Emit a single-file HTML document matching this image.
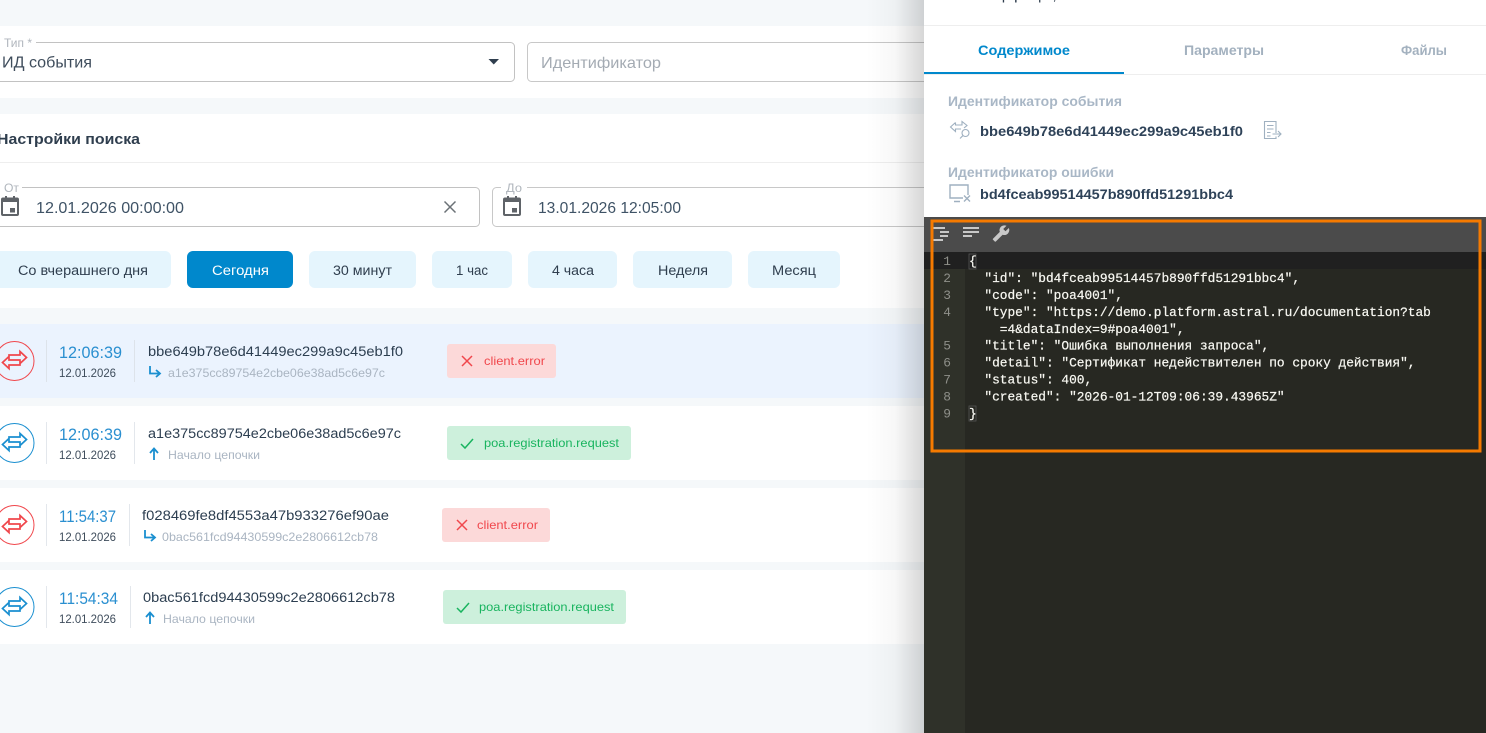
<!DOCTYPE html>
<html lang="ru"><head><meta charset="utf-8"><title>События</title>
<style>
html,body{margin:0;padding:0;background:#f5f8fa;overflow:hidden}
svg{display:block;font-family:"Liberation Sans",sans-serif}
.m{font-family:"Liberation Mono",monospace;font-size:12.83px;fill:#f8f8f2;stroke:#f8f8f2;stroke-width:.22px}
.n{font-family:"Liberation Mono",monospace;font-size:12.83px;fill:#8f908a}
.b{font-size:13.5px;fill:#2c3e50;text-anchor:start}
</style></head><body>
<svg xmlns="http://www.w3.org/2000/svg" width="1486" height="733" viewBox="0 0 1486 733">
<defs>
<linearGradient id="sh" x1="0" x2="1" y1="0" y2="0"><stop offset="0" stop-color="#000" stop-opacity="0"/><stop offset=".5" stop-color="#000" stop-opacity=".03"/><stop offset="1" stop-color="#000" stop-opacity=".16"/></linearGradient>
<g id="ex" fill="none" stroke-linejoin="miter">
<circle cx="0" cy="0" r="19.5" stroke-width="1"/>
<path stroke-width="1.7" d="M-5.500 -4.500 V-6 H5.500 V-9.500 L12 -3.500 L5.500 2.500 V-1 H-5.500 V-4.500 L-12 1.500 L-5.500 7.500 V4 H5.500 V2.500"/>
</g>
</defs>
<rect width="1486" height="733" fill="#f5f8fa"/>
<!-- cards -->
<rect x="0" y="26" width="924" height="72" fill="#fff"/>
<rect x="0" y="114" width="924" height="194" fill="#fff"/>
<rect x="0" y="324" width="924" height="74" fill="#ebf3fe"/>
<rect x="0" y="406" width="924" height="74" fill="#fff"/>
<rect x="0" y="488" width="924" height="74" fill="#fff"/>
<rect x="0" y="570" width="924" height="74" fill="#fff"/>
<!-- select -->
<rect x="-8" y="42.500" width="522.500" height="39" rx="4" fill="#fff" stroke="#c2c2c2"/>
<rect x="0" y="40" width="36" height="5" fill="#fff"/>
<text x="4" y="47" font-size="11.500" fill="#b0b6bd" textLength="28" lengthAdjust="spacingAndGlyphs">Тип *</text>
<text x="2" y="67.500" font-size="16" fill="#3f4d5c" textLength="90" lengthAdjust="spacingAndGlyphs">ИД события</text>
<path d="M488.500 59 H499 L493.750 64.500 Z" fill="#2f3e4e"/>
<rect x="527.500" y="42.500" width="420" height="39" rx="4" fill="#fff" stroke="#c8c8c8"/>
<text x="541" y="68" font-size="16" fill="#a4abb3" textLength="120" lengthAdjust="spacingAndGlyphs">Идентификатор</text>
<!-- search settings -->
<text x="-3" y="144" font-size="15" font-weight="bold" fill="#2f3e4e" textLength="143" lengthAdjust="spacingAndGlyphs">Настройки поиска</text>
<rect x="0" y="162" width="924" height="1" fill="#eeeeee"/>
<rect x="-8" y="187.500" width="487.500" height="39" rx="4" fill="#fff" stroke="#c2c2c2"/>
<rect x="0" y="185" width="22" height="5" fill="#fff"/>
<text x="4" y="192" font-size="11.500" fill="#b0b6bd" textLength="15" lengthAdjust="spacingAndGlyphs">От</text>
<g fill="#5f6368"><path d="M3 197.500 H5 V196 H7 V197.500 H13 V196 H15 V197.500 H17 Q19 197.500 19 199.500 V214 Q19 216 17 216 H3 Q1 216 1 214 V199.500 Q1 197.500 3 197.500 Z M3 202 V214 H17 V202 Z"/><rect x="10" y="208" width="5" height="4.500"/></g>
<text x="36" y="213" font-size="16" fill="#3f5366" textLength="148" lengthAdjust="spacingAndGlyphs">12.01.2026 00:00:00</text>
<path d="M444.500 201.500 L455.500 212.500 M455.500 201.500 L444.500 212.500" stroke="#6b7177" stroke-width="1.500" fill="none"/>
<rect x="492.500" y="187.500" width="460" height="39" rx="4" fill="#fff" stroke="#c8c8c8"/>
<rect x="501" y="185" width="26" height="5" fill="#fff"/>
<text x="506" y="192" font-size="11.500" fill="#b0b6bd" textLength="16" lengthAdjust="spacingAndGlyphs">До</text>
<g transform="translate(502,0)" fill="#5f6368"><path d="M3 197.500 H5 V196 H7 V197.500 H13 V196 H15 V197.500 H17 Q19 197.500 19 199.500 V214 Q19 216 17 216 H3 Q1 216 1 214 V199.500 Q1 197.500 3 197.500 Z M3 202 V214 H17 V202 Z"/><rect x="10" y="208" width="5" height="4.500"/></g>
<text x="538" y="213" font-size="16" fill="#3f5366" textLength="143" lengthAdjust="spacingAndGlyphs">13.01.2026 12:05:00</text>
<!-- buttons -->
<g fill="#e5f5fd">
<rect x="-10" y="251" width="181" height="37" rx="6"/>
<rect x="309" y="251" width="107" height="37" rx="6"/>
<rect x="432" y="251" width="80" height="37" rx="6"/>
<rect x="528" y="251" width="89" height="37" rx="6"/>
<rect x="633" y="251" width="99" height="37" rx="6"/>
<rect x="748" y="251" width="92" height="37" rx="6"/>
</g>
<rect x="187" y="251" width="106" height="37" rx="6" fill="#0088cc"/>
<g font-size="13.500" fill="#2f3e4e">
<text x="18" y="275" textLength="130" lengthAdjust="spacingAndGlyphs">Со вчерашнего дня</text>
<text x="212" y="275" fill="#fff" textLength="57" lengthAdjust="spacingAndGlyphs">Сегодня</text>
<text x="333" y="275" textLength="59" lengthAdjust="spacingAndGlyphs">30 минут</text>
<text x="456" y="275" textLength="32" lengthAdjust="spacingAndGlyphs">1 час</text>
<text x="552" y="275" textLength="42" lengthAdjust="spacingAndGlyphs">4 часа</text>
<text x="658" y="275" textLength="50" lengthAdjust="spacingAndGlyphs">Неделя</text>
<text x="772" y="275" textLength="44" lengthAdjust="spacingAndGlyphs">Месяц</text>
</g>
<!-- row 1 -->
<g><use href="#ex" x="14.500" y="361" stroke="#f0474c"/>
<rect x="46" y="340" width="1" height="42" fill="#dde3ea"/><rect x="134" y="340" width="1" height="42" fill="#dde3ea"/>
<text x="59" y="358" font-size="17" fill="#2a8fd0" textLength="63" lengthAdjust="spacingAndGlyphs">12:06:39</text>
<text x="59" y="377" font-size="12" fill="#3f4d5c" textLength="57" lengthAdjust="spacingAndGlyphs">12.01.2026</text>
<text x="148" y="356" class="b" textLength="255" lengthAdjust="spacingAndGlyphs">bbe649b78e6d41449ec299a9c45eb1f0</text>
<path d="M150 366 V373.500 H159 M156 370 L160 373.500 L156 377" stroke="#1a8fd0" stroke-width="1.800" fill="none"/>
<text x="168" y="377" font-size="12" fill="#aab5c2" textLength="217" lengthAdjust="spacingAndGlyphs">a1e375cc89754e2cbe06e38ad5c6e97c</text>
<rect x="447" y="344" width="109" height="34" rx="3" fill="#fcd9d9"/>
<path d="M462 356 L472 366 M472 356 L462 366" stroke="#f0474c" stroke-width="1.500"/>
<text x="484" y="365" font-size="12" fill="#f0474c" textLength="61" lengthAdjust="spacingAndGlyphs">client.error</text></g>
<!-- row 2 -->
<g><use href="#ex" x="14.500" y="443" stroke="#1a8fd0"/>
<rect x="46" y="422" width="1" height="42" fill="#e3e7ec"/><rect x="134" y="422" width="1" height="42" fill="#e3e7ec"/>
<text x="59" y="440" font-size="17" fill="#2a8fd0" textLength="63" lengthAdjust="spacingAndGlyphs">12:06:39</text>
<text x="59" y="459" font-size="12" fill="#3f4d5c" textLength="57" lengthAdjust="spacingAndGlyphs">12.01.2026</text>
<text x="148" y="438" class="b" textLength="253" lengthAdjust="spacingAndGlyphs">a1e375cc89754e2cbe06e38ad5c6e97c</text>
<path d="M154 460 V449 M150 453 L154 448.500 L158 453" stroke="#1a8fd0" stroke-width="1.800" fill="none"/>
<text x="168" y="459" font-size="12" fill="#aab5c2" textLength="92" lengthAdjust="spacingAndGlyphs">Начало цепочки</text>
<rect x="447" y="426" width="184" height="34" rx="3" fill="#cdf0dc"/>
<path d="M461 444 L465 448 L473 439" stroke="#19b45f" stroke-width="1.500" fill="none"/>
<text x="484" y="447" font-size="12" fill="#19b45f" textLength="135" lengthAdjust="spacingAndGlyphs">poa.registration.request</text></g>
<!-- row 3 -->
<g><use href="#ex" x="14.500" y="525" stroke="#f0474c"/>
<rect x="46" y="504" width="1" height="42" fill="#e3e7ec"/><rect x="129" y="504" width="1" height="42" fill="#e3e7ec"/>
<text x="59" y="522" font-size="17" fill="#2a8fd0" textLength="57" lengthAdjust="spacingAndGlyphs">11:54:37</text>
<text x="59" y="541" font-size="12" fill="#3f4d5c" textLength="57" lengthAdjust="spacingAndGlyphs">12.01.2026</text>
<text x="142" y="520" class="b" textLength="247" lengthAdjust="spacingAndGlyphs">f028469fe8df4553a47b933276ef90ae</text>
<path d="M145 530 V537.500 H154 M151 534 L155 537.500 L151 541" stroke="#1a8fd0" stroke-width="1.800" fill="none"/>
<text x="162" y="541" font-size="12" fill="#aab5c2" textLength="216" lengthAdjust="spacingAndGlyphs">0bac561fcd94430599c2e2806612cb78</text>
<rect x="442" y="508" width="108" height="34" rx="3" fill="#fcd9d9"/>
<path d="M457 520 L467 530 M467 520 L457 530" stroke="#f0474c" stroke-width="1.500"/>
<text x="477" y="529" font-size="12" fill="#f0474c" textLength="61" lengthAdjust="spacingAndGlyphs">client.error</text></g>
<!-- row 4 -->
<g><use href="#ex" x="14.500" y="607" stroke="#1a8fd0"/>
<rect x="46" y="586" width="1" height="42" fill="#e3e7ec"/><rect x="130" y="586" width="1" height="42" fill="#e3e7ec"/>
<text x="59" y="604" font-size="17" fill="#2a8fd0" textLength="59" lengthAdjust="spacingAndGlyphs">11:54:34</text>
<text x="59" y="623" font-size="12" fill="#3f4d5c" textLength="57" lengthAdjust="spacingAndGlyphs">12.01.2026</text>
<text x="143" y="602" class="b" textLength="252" lengthAdjust="spacingAndGlyphs">0bac561fcd94430599c2e2806612cb78</text>
<path d="M150 624 V613 M146 617 L150 612.500 L154 617" stroke="#1a8fd0" stroke-width="1.800" fill="none"/>
<text x="163" y="623" font-size="12" fill="#aab5c2" textLength="92" lengthAdjust="spacingAndGlyphs">Начало цепочки</text>
<rect x="443" y="590" width="183" height="34" rx="3" fill="#cdf0dc"/>
<path d="M457 608 L461 612 L469 603" stroke="#19b45f" stroke-width="1.500" fill="none"/>
<text x="479" y="611" font-size="12" fill="#19b45f" textLength="135" lengthAdjust="spacingAndGlyphs">poa.registration.request</text></g>
<!-- panel shadow -->
<rect x="866" y="0" width="58" height="733" fill="url(#sh)"/>
<!-- panel -->
<rect x="924" y="0" width="562" height="733" fill="#fff"/>
<text x="985" y="-0.500" font-size="15" font-weight="bold" fill="#2f3e4e" textLength="71" lengthAdjust="spacingAndGlyphs">Информация,</text>
<rect x="924" y="25" width="562" height="1" fill="#eeeeee"/>
<rect x="924" y="74" width="562" height="1" fill="#eeeeee"/>
<rect x="924" y="72" width="200" height="2" fill="#0088cc"/>
<g font-size="14" font-weight="bold">
<text x="978" y="55" fill="#0088cc" textLength="92" lengthAdjust="spacingAndGlyphs">Содержимое</text>
<text x="1184" y="55" fill="#a3b1bf" textLength="80" lengthAdjust="spacingAndGlyphs">Параметры</text>
<text x="1401" y="55" fill="#a3b1bf" textLength="46" lengthAdjust="spacingAndGlyphs">Файлы</text>
</g>
<text x="948" y="106" font-size="13.500" font-weight="bold" fill="#a9b7c6" textLength="174" lengthAdjust="spacingAndGlyphs">Идентификатор события</text>
<g fill="none" stroke="#9fb0c0" stroke-width="1.100">
<path d="M955.500 122.500 L950.500 127 L955.500 131.500 V129 H961 M955.500 122.500 V125 H962 V121.500 L967 125.500 L964 128"/>
<circle cx="965.500" cy="133" r="3.500"/><path d="M962.800 135.700 L960 138.500"/>
</g>
<text x="980" y="136" font-size="14" font-weight="bold" fill="#2e4258" textLength="263" lengthAdjust="spacingAndGlyphs">bbe649b78e6d41449ec299a9c45eb1f0</text>
<g fill="none" stroke="#9fb0c0" stroke-width="1.100">
<path d="M1276 133 V121.500 H1264.500 V138.500 H1276 V136.500"/>
<path d="M1267 125.500 H1273.500 M1267 129 H1273.500 M1267 132.500 H1270.500 M1267 136 H1270.500 M1272.500 134 H1281 M1278 131 L1281 134 L1278 137"/>
</g>
<text x="948" y="177" font-size="13.500" font-weight="bold" fill="#a9b7c6" textLength="166" lengthAdjust="spacingAndGlyphs">Идентификатор ошибки</text>
<g fill="none" stroke="#9fb0c0" stroke-width="1.400">
<path d="M968 195 V185 H950 V198 H963"/>
<path d="M954 201.500 H960 M964 195.500 L970 201.500 M970 195.500 L964 201.500"/>
</g>
<text x="980" y="199" font-size="14" font-weight="bold" fill="#2e4258" textLength="253" lengthAdjust="spacingAndGlyphs">bd4fceab99514457b890ffd51291bbc4</text>
<!-- editor -->
<rect x="924" y="217" width="562" height="516" fill="#272822"/>
<rect x="924" y="217" width="41" height="516" fill="#2f3129"/>
<rect x="924" y="217" width="562" height="35" fill="#4b4b4b"/>
<rect x="924" y="252" width="562" height="17" fill="#202020"/>
<g fill="#c8c8c8">
<rect x="933" y="227" width="12" height="2"/><rect x="940" y="231" width="9" height="2"/><rect x="940" y="235" width="8" height="2"/><rect x="933" y="239" width="10" height="2"/>
<rect x="963" y="227" width="16" height="2"/><rect x="963" y="231" width="16" height="2"/><rect x="963" y="235" width="9" height="2"/>
</g>
<g transform="translate(1010,224.500) scale(-0.75,0.75)"><path fill="#c8c8c8" d="M22.700 19l-9.100-9.100c.9-2.300.4-5-1.500-6.900-2-2-5-2.400-7.400-1.300L9 6 6 9 1.600 4.700C.4 7.100.9 10.100 2.900 12.100c1.900 1.900 4.600 2.400 6.900 1.500l9.100 9.100c.4.400 1 .4 1.400 0l2.300-2.300c.5-.4.500-1.100.1-1.400z"/></g>
<g text-anchor="end">
<text class="n" x="951" y="265">1</text>
<text class="n" x="951" y="281.900">2</text>
<text class="n" x="951" y="298.900">3</text>
<text class="n" x="951" y="315.800">4</text>
<text class="n" x="951" y="349.700">5</text>
<text class="n" x="951" y="366.700">6</text>
<text class="n" x="951" y="383.600">7</text>
<text class="n" x="951" y="400.600">8</text>
<text class="n" x="951" y="417.500">9</text>
</g>
<rect x="969" y="254" width="7" height="15" fill="none" stroke="#555" stroke-width=".8"/>
<rect x="969" y="406" width="7" height="15" fill="none" stroke="#555" stroke-width=".8"/>
<text class="m" x="969" y="265">{</text>
<text class="m" x="984.400" y="281.900">"id": "bd4fceab99514457b890ffd51291bbc4",</text>
<text class="m" x="984.400" y="298.900">"code": "poa4001",</text>
<text class="m" x="984.400" y="315.800">"type": "https://demo.platform.astral.ru/documentation?tab</text>
<text class="m" x="999.800" y="332.800">=4&amp;dataIndex=9#poa4001",</text>
<text class="m" x="984.400" y="349.700">"title": "Ошибка выполнения запроса",</text>
<text class="m" x="984.400" y="366.700">"detail": "Сертификат недействителен по сроку действия",</text>
<text class="m" x="984.400" y="383.600">"status": 400,</text>
<text class="m" x="984.400" y="400.600">"created": "2026-01-12T09:06:39.43965Z"</text>
<text class="m" x="969" y="417.500">}</text>
<rect x="932" y="221" width="548" height="230" fill="none" stroke="#f57a00" stroke-width="3"/>
</svg>
</body></html>
